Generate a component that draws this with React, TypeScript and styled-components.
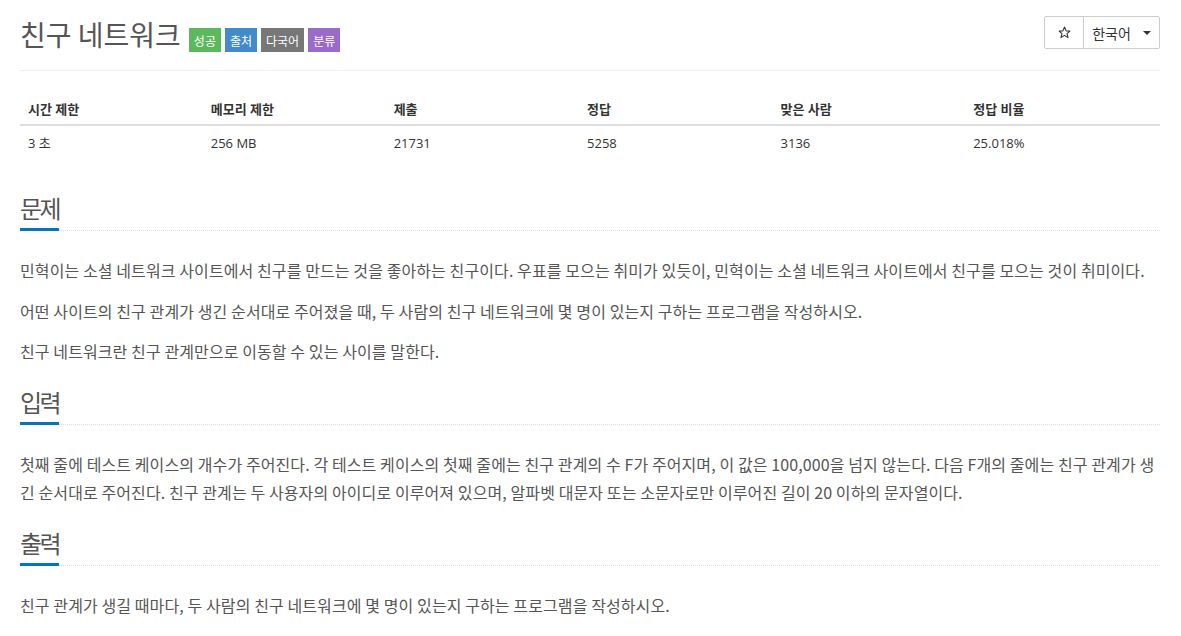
import styled, { createGlobalStyle } from 'styled-components'

const GlobalStyle = createGlobalStyle`
  html, body {
    margin: 0;
    padding: 0;
    background: #fff;
  }
  body {
    font-family: "Open Sans", "Noto Sans CJK KR", sans-serif;
    color: #333;
  }
`

const stats = [
  { label: '시간 제한', value: '3 초', width: 184 },
  { label: '메모리 제한', value: '256 MB', width: 183 },
  { label: '제출', value: '21731', width: 193 },
  { label: '정답', value: '5258', width: 194 },
  { label: '맞은 사람', value: '3136', width: 193 },
  { label: '정답 비율', value: '25.018%', width: 193 },
]

const labels = [
  { text: '성공', color: '#5cb85c' },
  { text: '출처', color: '#428bca' },
  { text: '다국어', color: '#777777' },
  { text: '분류', color: '#9b6bcc' },
]

const Page = styled.div`
  padding: 16px 21px 0 20px;
  font-family: "Open Sans", "Noto Sans CJK KR", sans-serif;
`

const Header = styled.div`
  display: flex;
  justify-content: space-between;
  align-items: flex-start;
  padding-bottom: 18px;
  border-bottom: 1px solid #eee;
`

const TitleRow = styled.div`
  display: flex;
  align-items: flex-end;
  gap: 4px;
`

const Title = styled.h1`
  margin: 0 4px 0 0;
  font-size: 28px;
  font-weight: 400;
  line-height: 36px;
  color: #555;
  font-family: "Noto Sans CJK KR", sans-serif;
`

const Label = styled.span<{ $bg: string }>`
  display: inline-flex;
  align-items: center;
  height: 24px;
  padding: 0 5px;
  background: ${(p) => p.$bg};
  color: #fff;
  font-size: 12px;
  font-family: "Noto Sans CJK KR", sans-serif;
`

const ButtonGroup = styled.div`
  display: flex;
  border: 1px solid #ccc;
  border-radius: 2px;
  height: 31px;
`

const GroupButton = styled.div<{ $w: number }>`
  display: flex;
  align-items: center;
  justify-content: center;
  gap: 12px;
  width: ${(p) => p.$w}px;
  font-size: 14px;
  color: #333;
  font-family: "Noto Sans CJK KR", sans-serif;
  & + & {
    border-left: 1px solid #ccc;
  }
`

const Caret = styled.span`
  width: 0;
  height: 0;
  border-left: 4px solid transparent;
  border-right: 4px solid transparent;
  border-top: 4px solid #333;
`

const StatTable = styled.table`
  width: 100%;
  margin-top: 21px;
  margin-bottom: 32px;
  border-collapse: collapse;
  font-size: 13px;
  color: #333;
`

const HeadCell = styled.th<{ $w: number }>`
  width: ${(p) => p.$w}px;
  text-align: left;
  padding: 8px 8px 6px;
  font-weight: 700;
  line-height: 18px;
  border-bottom: 2px solid #ddd;
  font-family: "Open Sans", "Noto Sans CJK KR", sans-serif;
`

const BodyCell = styled.td`
  padding: 8px;
  line-height: 18px;
`

const Section = styled.section`
  margin-top: 20px;
`

const SectionHead = styled.div`
  border-bottom: 1px dotted #ddd;
  margin-bottom: 25px;
`

const SectionTitle = styled.h2`
  display: inline-block;
  margin: 0 0 -1px 0;
  padding-bottom: 4px;
  font-size: 24px;
  letter-spacing: -2.5px;
  line-height: 32px;
  font-weight: 400;
  color: #555;
  border-bottom: 3px solid #0076c0;
  font-family: "Noto Sans CJK KR", sans-serif;
`

const Para = styled.p`
  margin: 0 0 12px 0;
  font-size: 16px;
  line-height: 28.5px;
  letter-spacing: 0.1px;
  color: #555;
  word-break: break-all;
  font-family: "Noto Sans CJK KR", sans-serif;
`

const StarIcon = () => (
  <svg width="13" height="13" viewBox="0 0 24 24" fill="none" stroke="#333" strokeWidth="2" strokeLinejoin="round">
    <polygon points="12,2 15,9 22,9.3 16.6,14 18.5,21.5 12,17.3 5.5,21.5 7.4,14 2,9.3 9,9" />
  </svg>
)

export default function App() {
  return (
    <>
      <GlobalStyle />
      <Page>
        <Header>
          <TitleRow>
            <Title>친구 네트워크</Title>
            {labels.map((l) => (
              <Label key={l.text} $bg={l.color}>{l.text}</Label>
            ))}
          </TitleRow>
          <ButtonGroup>
            <GroupButton $w={38}><StarIcon /></GroupButton>
            <GroupButton $w={75}>한국어 <Caret /></GroupButton>
          </ButtonGroup>
        </Header>

        <StatTable>
          <thead>
            <tr>
              {stats.map((s) => (
                <HeadCell key={s.label} $w={s.width}>{s.label}</HeadCell>
              ))}
            </tr>
          </thead>
          <tbody>
            <tr>
              {stats.map((s) => (
                <BodyCell key={s.label}>{s.value}</BodyCell>
              ))}
            </tr>
          </tbody>
        </StatTable>

        <Section>
          <SectionHead><SectionTitle>문제</SectionTitle></SectionHead>
          <Para>민혁이는 소셜 네트워크 사이트에서 친구를 만드는 것을 좋아하는 친구이다. 우표를 모으는 취미가 있듯이, 민혁이는 소셜 네트워크 사이트에서 친구를 모으는 것이 취미이다.</Para>
          <Para>어떤 사이트의 친구 관계가 생긴 순서대로 주어졌을 때, 두 사람의 친구 네트워크에 몇 명이 있는지 구하는 프로그램을 작성하시오.</Para>
          <Para>친구 네트워크란 친구 관계만으로 이동할 수 있는 사이를 말한다.</Para>
        </Section>

        <Section>
          <SectionHead><SectionTitle>입력</SectionTitle></SectionHead>
          <Para>첫째 줄에 테스트 케이스의 개수가 주어진다. 각 테스트 케이스의 첫째 줄에는 친구 관계의 수 F가 주어지며, 이 값은 100,000을 넘지 않는다. 다음 F개의 줄에는 친구 관계가 생긴 순서대로 주어진다. 친구 관계는 두 사용자의 아이디로 이루어져 있으며, 알파벳 대문자 또는 소문자로만 이루어진 길이 20 이하의 문자열이다.</Para>
        </Section>

        <Section>
          <SectionHead><SectionTitle>출력</SectionTitle></SectionHead>
          <Para>친구 관계가 생길 때마다, 두 사람의 친구 네트워크에 몇 명이 있는지 구하는 프로그램을 작성하시오.</Para>
        </Section>
      </Page>
    </>
  )
}
